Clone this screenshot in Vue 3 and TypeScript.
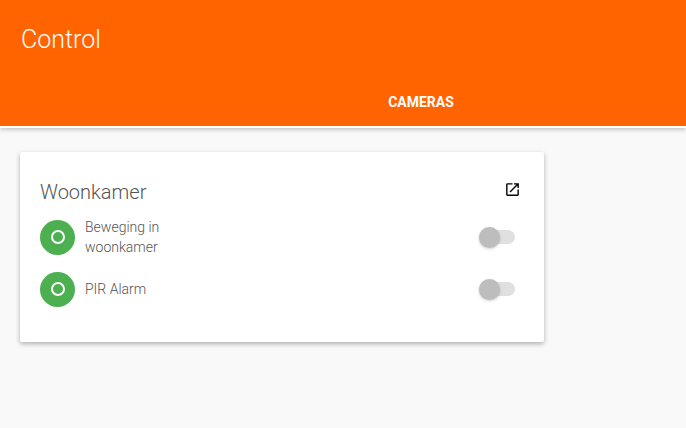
<template>
  <div class="page">
    <header class="toolbar">
      <h1 class="title">Control</h1>
      <nav class="tabs">
        <span class="tab">CAMERAS</span>
      </nav>
    </header>
    <main class="content">
      <section class="card">
        <div class="card-head">
          <h2 class="card-title">Woonkamer</h2>
          <svg class="open-icon" viewBox="0 0 24 24" width="17" height="17">
            <path
              d="M19 19H5V5h7V3H5a2 2 0 0 0-2 2v14a2 2 0 0 0 2 2h14c1.1 0 2-.9 2-2v-7h-2v7zM14 3v2h3.59l-9.83 9.83 1.41 1.41L19 6.41V10h2V3h-7z"
            />
          </svg>
        </div>
        <ul class="rows">
          <li v-for="item in items" :key="item.label" class="row">
            <span class="avatar"><span class="ring"></span></span>
            <span class="label">{{ item.label }}</span>
            <span class="toggle"><span class="thumb"></span></span>
          </li>
        </ul>
      </section>
    </main>
  </div>
</template>

<script setup lang="ts">
interface Item {
  label: string;
}

const items: Item[] = [{ label: "Beweging in woonkamer" }, { label: "PIR Alarm" }];
</script>

<style>
html,
body {
  margin: 0;
  background: #f9f9f9;
}
</style>

<style scoped>
.page {
  height: 428px;
  overflow: hidden;
  background: #f9f9f9;
  font-family: Roboto, "Liberation Sans", sans-serif;
}

.toolbar {
  height: 126px;
  box-sizing: border-box;
  padding: 25px 0 0 21px;
  background: #ff6400;
  box-shadow: 0 2px 0 #ffffff, 0 4px 4px rgba(0, 0, 0, 0.2);
  display: flex;
  flex-direction: column;
}

.title {
  margin: 0;
  font-size: 25px;
  line-height: 30px;
  font-weight: 300;
  color: #ffffff;
}

.tabs {
  margin-top: auto;
  height: 48px;
  display: flex;
  align-items: center;
  justify-content: center;
  padding-left: 135px;
}

.tab {
  font-size: 14px;
  font-weight: 700;
  color: #ffffff;
}

.content {
  padding: 26px 0 0 20px;
}

.card {
  width: 524px;
  height: 190px;
  box-sizing: border-box;
  padding: 24px 20px 0;
  background: #ffffff;
  border-radius: 2px;
  box-shadow: 0 2px 5px rgba(0, 0, 0, 0.3);
}

.card-head {
  display: flex;
  align-items: flex-start;
  justify-content: space-between;
}

.card-title {
  margin: 0;
  font-size: 20px;
  line-height: 32px;
  font-weight: 300;
  color: #555555;
}

.open-icon {
  margin: 5px 3px 0 0;
  fill: #000000;
}

.rows {
  list-style: none;
  margin: 3px 0 0;
  padding: 0;
}

.row {
  display: flex;
  align-items: center;
  height: 52px;
}

.avatar {
  width: 35px;
  height: 35px;
  border-radius: 50%;
  background: #4caf50;
  display: flex;
  align-items: center;
  justify-content: center;
  flex: none;
}

.ring {
  width: 10px;
  height: 10px;
  border: 2px solid #ffffff;
  border-radius: 50%;
}

.label {
  width: 90px;
  margin-left: 10px;
  font-size: 14px;
  line-height: 20px;
  font-weight: 300;
  color: #555555;
}

.toggle {
  margin-left: auto;
  width: 36px;
  height: 14px;
  margin-right: 9px;
  border-radius: 7px;
  background: #e0e0e0;
  position: relative;
}

.thumb {
  position: absolute;
  left: 0;
  top: -3px;
  width: 21px;
  height: 21px;
  border-radius: 50%;
  background: #bdbdbd;
  box-shadow: 0 1px 3px rgba(0, 0, 0, 0.2);
}
</style>
